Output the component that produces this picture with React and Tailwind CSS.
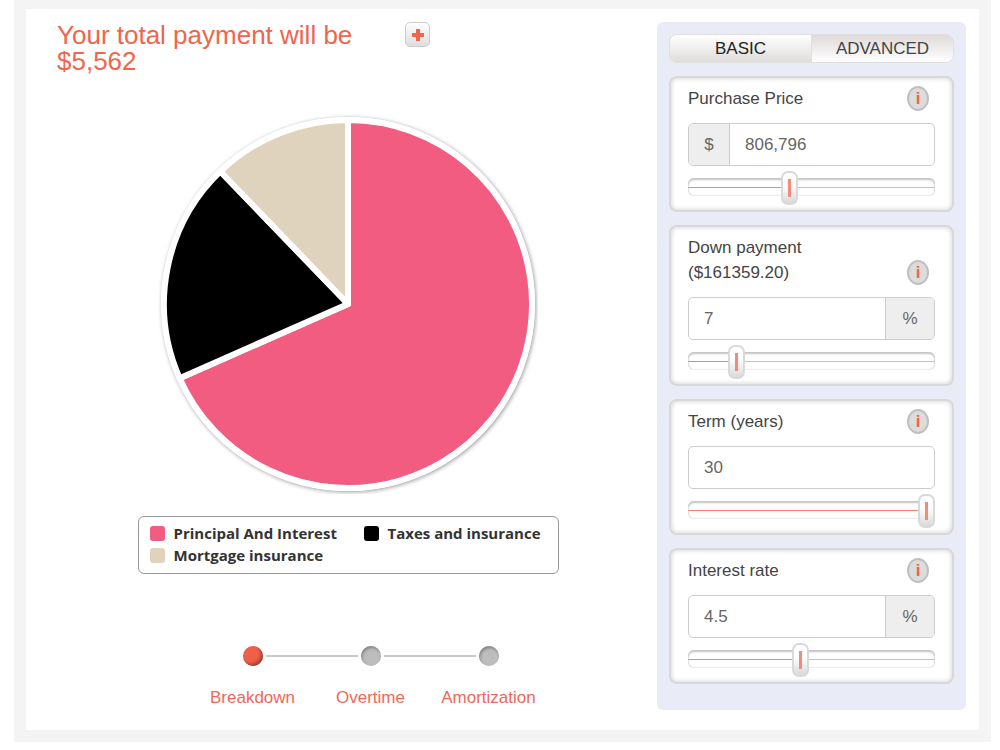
import React, { useState } from 'react';
import clsx from 'clsx';

const slices = [
  { label: 'Principal And Interest', value: 68.4, color: '#f25c80' },
  { label: 'Taxes and insurance', value: 19.4, color: '#000000' },
  { label: 'Mortgage insurance', value: 12.2, color: '#dfd3bd' },
];

const fields = [
  { id: 'price', label: 'Purchase Price', prefix: '$', value: 806796, min: 0, max: 2000000, step: 1 },
  { id: 'down', label: 'Down payment ($161359.20)', suffix: '%', value: 7, min: 0, max: 40, step: 1 },
  { id: 'term', label: 'Term (years)', value: 30, min: 0, max: 30, step: 1 },
  { id: 'rate', label: 'Interest rate', suffix: '%', value: 4.5, min: 0, max: 10, step: 0.1 },
];

const steps = ['Breakdown', 'Overtime', 'Amortization'];

const pointAt = (percent, radius) => {
  const angle = (percent / 100) * Math.PI * 2 - Math.PI / 2;
  return [190 + radius * Math.cos(angle), 190 + radius * Math.sin(angle)];
};

const PieChart = () => {
  let start = 0;

  return (
    <svg viewBox="0 0 380 380" className="w-[380px] max-w-full" role="img" aria-label="Payment breakdown">
      <circle cx="190" cy="190" r="187" fill="#fff" className="drop-shadow-[1px_1px_2px_rgba(0,0,0,0.4)]" />
      {slices.map((slice) => {
        const end = start + slice.value;
        const [x1, y1] = pointAt(start, 184);
        const [x2, y2] = pointAt(end, 184);
        const large = slice.value > 50 ? 1 : 0;
        start = end;
        return (
          <path
            key={slice.label}
            d={`M190 190 L${x1} ${y1} A184 184 0 ${large} 1 ${x2} ${y2} Z`}
            fill={slice.color}
            stroke="#fff"
            strokeWidth="6"
            strokeLinejoin="round"
          />
        );
      })}
    </svg>
  );
};

const Legend = () => (
  <ul className="mt-[22px] grid w-[421px] max-w-full grid-cols-[214px_1fr] rounded-md border border-[#999] px-[11px] pt-[5px] pb-[7px] font-['Open_Sans',sans-serif] text-[15px] leading-[22px] font-bold text-[#333]">
    {slices.map((slice) => (
      <li key={slice.label} className="flex items-center gap-[9px] whitespace-nowrap">
        <span className="size-[15px] rounded-[3px]" style={{ backgroundColor: slice.color }} />
        {slice.label}
      </li>
    ))}
  </ul>
);

const Steps = () => {
  const [active, setActive] = useState(0);

  return (
    <nav className="mt-[72px] flex pl-[45px]">
      {steps.map((step, i) => (
        <button
          key={step}
          type="button"
          onClick={() => setActive(i)}
          className="flex w-[118px] flex-col items-center gap-[22px] text-[17px] leading-5 text-[#f0685a]"
        >
          <span className="flex w-full items-center gap-[3px]">
            <span className={clsx('h-[2px] flex-1', i > 0 && 'bg-[#c8c8c8]')} />
            <span
              className={clsx(
                'size-5 rounded-full',
                i === active
                  ? 'bg-[#f05f48] shadow-[inset_-2px_-2px_3px_#a04438]'
                  : 'bg-[#bdbdbd] shadow-[inset_1px_2px_3px_#858585]'
              )}
            />
            <span className={clsx('h-[2px] flex-1', i < steps.length - 1 && 'bg-[#c8c8c8]')} />
          </span>
          {step}
        </button>
      ))}
    </nav>
  );
};

const Slider = ({ field, value, onChange }) => {
  const fill = ((value - field.min) / (field.max - field.min)) * 100;

  return (
    <input
      type="range"
      aria-label={`${field.label} slider`}
      min={field.min}
      max={field.max}
      step={field.step}
      value={value}
      onChange={(e) => onChange(Number(e.target.value))}
      style={{ backgroundSize: `${fill}% 1px, 100% 1px` }}
      className="mt-[5px] block h-8 w-full cursor-pointer appearance-none bg-[linear-gradient(#f77f6e,#f77f6e),linear-gradient(#c2c2c2,#c2c2c2)] bg-[position:0_16px] bg-no-repeat [&::-webkit-slider-runnable-track]:h-[18px] [&::-webkit-slider-runnable-track]:rounded-md [&::-webkit-slider-runnable-track]:shadow-[inset_0_2px_2px_#c4c4c4,inset_0_0_2px_#bbb] [&::-webkit-slider-thumb]:mt-[-7px] [&::-webkit-slider-thumb]:h-[34px] [&::-webkit-slider-thumb]:w-[17px] [&::-webkit-slider-thumb]:appearance-none [&::-webkit-slider-thumb]:rounded-[7px] [&::-webkit-slider-thumb]:border-2 [&::-webkit-slider-thumb]:border-[#d9d9d9] [&::-webkit-slider-thumb]:bg-[linear-gradient(#f58a78,#f58a78),linear-gradient(#fff_40%,#d9d9d9)] [&::-webkit-slider-thumb]:bg-[length:3px_18px,100%_100%] [&::-webkit-slider-thumb]:bg-center [&::-webkit-slider-thumb]:bg-no-repeat"
    />
  );
};

const Affix = ({ children, className }) => (
  <span className={clsx('flex items-center justify-center bg-[#eee]', className)}>{children}</span>
);

const FieldCard = ({ field }) => {
  const [value, setValue] = useState(field.value);

  const handleText = (e) => {
    const next = Number(e.target.value.replace(/,/g, ''));
    if (!Number.isNaN(next)) setValue(next);
  };

  return (
    <section className="rounded-lg border-2 border-[#d8d8d8] bg-white px-[17px] pt-2 pb-[7px] shadow-[inset_0_0_5px_#ccc]">
      <div className="flex items-end justify-between pr-[6px]">
        <label htmlFor={field.id} className="max-w-[150px] text-[17px] leading-[25px] text-[#444]">
          {field.label}
        </label>
        <button
          type="button"
          aria-label={`About ${field.label}`}
          className="flex h-[25px] w-[22px] items-center justify-center rounded-[50%] border-2 border-[#bfbfbf] bg-[#dcdcdc] text-[17px] leading-none font-bold text-[#f9603f]"
        >
          i
        </button>
      </div>
      <div className="mt-3 flex h-[43px] overflow-hidden rounded-[5px] border border-[#ccc] text-[17px] text-[#666]">
        {field.prefix && <Affix className="w-[41px] border-r border-[#ccc]">{field.prefix}</Affix>}
        <input
          id={field.id}
          type="text"
          value={value.toLocaleString('en-US')}
          onChange={handleText}
          className="min-w-0 flex-1 px-[15px] outline-none"
        />
        {field.suffix && <Affix className="w-[49px] border-l border-[#ccc]">{field.suffix}</Affix>}
      </div>
      <Slider field={field} value={value} onChange={setValue} />
    </section>
  );
};

const ModeTabs = () => (
  <div className="flex h-[29px] overflow-hidden rounded-lg border border-[#e0dede] text-[17px]">
    <button type="button" className="flex-1 bg-linear-to-b from-white to-[#e0dcdc] text-[#222]">
      BASIC
    </button>
    <button type="button" className="flex-1 border-l border-[#e0dede] bg-linear-to-b from-[#e0dada] to-white text-[#444]">
      ADVANCED
    </button>
  </div>
);

const App = () => (
  <div className="bg-white pr-[9px] pb-2 pl-[14px] font-['Liberation_Sans',Arial,sans-serif]">
    <main className="flex border-x-12 border-t-9 border-b-12 border-[#f4f4f4] pt-[13px] pr-[13px] pb-5 pl-[31px]">
      <div className="flex min-w-0 flex-1 flex-col items-center pr-[18px]">
        <header className="flex w-full items-start">
          <h1 className="w-[348px] pr-10 text-[26px] leading-[26px] text-[#f1654c]">
            Your total payment will be $5,562
          </h1>
          <button
            type="button"
            aria-label="Show details"
            className="flex size-[25px] items-center justify-center rounded-[5px] border border-[#ccc] bg-linear-to-b from-white to-[#ddd]"
          >
            <svg viewBox="0 0 12 12" className="size-3" stroke="#f1654c" strokeWidth="4">
              <path d="M6 0v12M0 6h12" />
            </svg>
          </button>
        </header>
        <div className="mt-10 flex justify-center">
          <PieChart />
        </div>
        <Legend />
        <Steps />
      </div>

      <aside className="flex w-[309px] shrink-0 flex-col gap-[13px] rounded-md bg-[#e9ecf6] px-3 pt-3 pb-[26px]">
        <ModeTabs />
        {fields.map((field) => (
          <FieldCard key={field.id} field={field} />
        ))}
      </aside>
    </main>
  </div>
);

export default App;
